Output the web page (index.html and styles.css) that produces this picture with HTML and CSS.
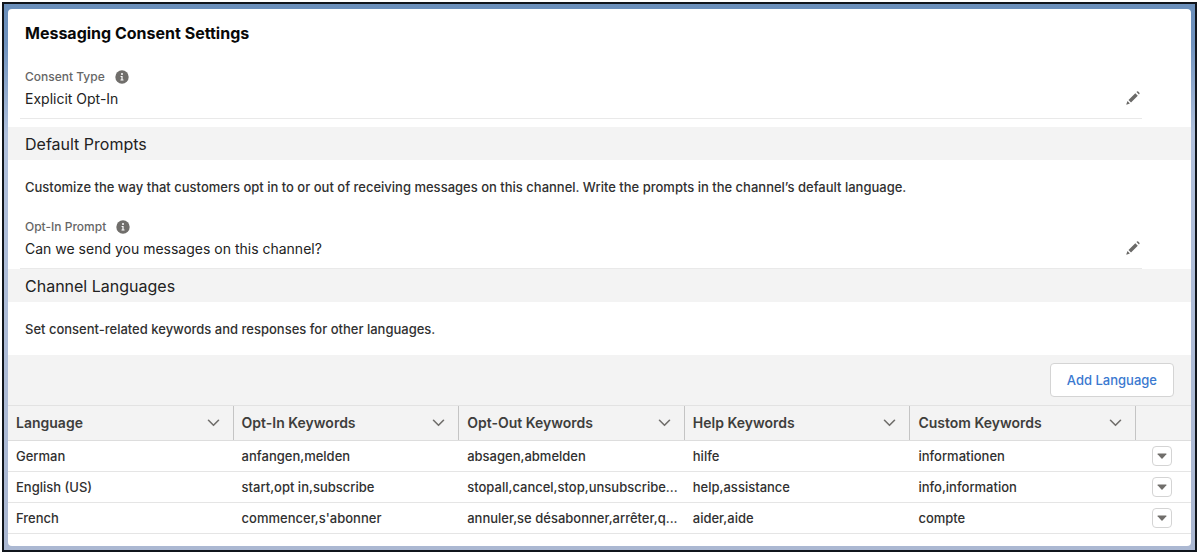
FILE: index.html
```html
<!DOCTYPE html>
<html lang="en">
<head>
    <meta charset="UTF-8">
    <title>Messaging Consent Settings</title>
    <link rel="stylesheet" href="styles.css">
</head>
<body>

<!-- shared icons -->
<svg class="sprite" aria-hidden="true">
    <symbol id="info" viewBox="0 0 14 14">
        <circle cx="7" cy="7" r="6.7" fill="#706e6b"/>
        <circle cx="7" cy="4" r="1" fill="#fff"/>
        <path d="M5.6 6h2v3.4h.9v1h-3v-1h.9V7h-.8z" fill="#fff"/>
    </symbol>
    <symbol id="pencil" viewBox="0 0 14 14">
        <path d="M10.5 1.1l.5-.5q.6-.5 1.2 0l1.2 1.2q.5.6 0 1.2l-.5.5zM9.3 2.2l2.5 2.5-6.8 6.8-2.5-2.5zM1.5 10.1l2.4 2.4-2.8 1.1q-.9.2-.7-.7z" fill="#6b6a68"/>
    </symbol>
    <symbol id="chevron" viewBox="0 0 12 8">
        <path d="M1 1.3l5 5 5-5" fill="none" stroke="#706e6b" stroke-width="1.6" stroke-linecap="round" stroke-linejoin="round"/>
    </symbol>
    <symbol id="caret" viewBox="0 0 10 6">
        <path d="M1 .4h8q.8.1.4.8L5.5 5.6q-.5.5-1 0L.6 1.2Q.2.5 1 .4z" fill="#706e6b"/>
    </symbol>
</svg>

<div class="frame">
    <main class="card">
        <h1 class="title">Messaging Consent Settings</h1>

        <div class="field">
            <div class="field-text">
                <div class="field-label">Consent Type <svg class="info"><use href="#info"/></svg></div>
                <div class="field-value">Explicit Opt-In</div>
            </div>
            <button class="edit" aria-label="Edit Consent Type"><svg><use href="#pencil"/></svg></button>
        </div>

        <h2 class="section-title spaced">Default Prompts</h2>
        <p class="section-text">Customize the way that customers opt in to or out of receiving messages on this channel. Write the prompts in the channel’s default language.</p>

        <div class="field">
            <div class="field-text">
                <div class="field-label">Opt-In Prompt <svg class="info"><use href="#info"/></svg></div>
                <div class="field-value">Can we send you messages on this channel?</div>
            </div>
            <button class="edit" aria-label="Edit Opt-In Prompt"><svg><use href="#pencil"/></svg></button>
        </div>

        <h2 class="section-title">Channel Languages</h2>
        <p class="section-text">Set consent-related keywords and responses for other languages.</p>

        <div class="toolbar">
            <button class="add-button">Add Language</button>
        </div>

        <table class="languages">
            <thead>
                <tr>
                    <th><div class="head">Language <button class="sort" aria-label="Language column actions"><svg><use href="#chevron"/></svg></button></div></th>
                    <th><div class="head">Opt-In Keywords <button class="sort" aria-label="Opt-In column actions"><svg><use href="#chevron"/></svg></button></div></th>
                    <th><div class="head">Opt-Out Keywords <button class="sort" aria-label="Opt-Out column actions"><svg><use href="#chevron"/></svg></button></div></th>
                    <th><div class="head">Help Keywords <button class="sort" aria-label="Help column actions"><svg><use href="#chevron"/></svg></button></div></th>
                    <th><div class="head">Custom Keywords <button class="sort" aria-label="Custom column actions"><svg><use href="#chevron"/></svg></button></div></th>
                    <th class="actions"></th>
                </tr>
            </thead>
            <tbody>
                <tr>
                    <td>German</td>
                    <td>anfangen,melden</td>
                    <td>absagen,abmelden</td>
                    <td>hilfe</td>
                    <td>informationen</td>
                    <td class="actions"><button class="row-menu" aria-label="German actions"><svg><use href="#caret"/></svg></button></td>
                </tr>
                <tr>
                    <td>English (US)</td>
                    <td>start,opt in,subscribe</td>
                    <td>stopall,cancel,stop,unsubscribe...</td>
                    <td>help,assistance</td>
                    <td>info,information</td>
                    <td class="actions"><button class="row-menu" aria-label="English (US) actions"><svg><use href="#caret"/></svg></button></td>
                </tr>
                <tr>
                    <td>French</td>
                    <td>commencer,s'abonner</td>
                    <td>annuler,se désabonner,arrêter,q...</td>
                    <td>aider,aide</td>
                    <td>compte</td>
                    <td class="actions"><button class="row-menu" aria-label="French actions"><svg><use href="#caret"/></svg></button></td>
                </tr>
            </tbody>
        </table>
    </main>
</div>

</body>
</html>
```
FILE: styles.css
```css
* {
    box-sizing: border-box;
}

body {
    margin: 2px 3px 2px 2px;
    background-color: white;
    color: #222222;
    font-family: Inter, "Liberation Sans", sans-serif;
    font-size: 14px;
    line-height: 20px;
}

button {
    padding: 0;
    border: none;
    background: none;
    font: inherit;
    cursor: pointer;
}

svg {
    display: block;
}

.sprite {
    display: none;
}

.frame {
    border: 2px solid #10151c;
    padding: 5px 4px 4px;
    background: linear-gradient(#6a8fbb 0, #7093bf 40px, #b0c0dc 130px, #abb8d2 100%);
}

.card {
    padding: 14px 0 12px;
    border-radius: 4px;
    background-color: white;
    overflow: hidden;
}

.title {
    margin: 0 17px 24px;
    color: #080808;
    font-size: 16px;
    line-height: 20px;
    font-weight: 700;
}

.field {
    display: flex;
    justify-content: space-between;
    align-items: center;
    margin: 0 49px 0 12px;
    padding: 0 2px 9px 5px;
    border-bottom: 1px solid #e9e9e9;
}

.field-text {
    display: grid;
    gap: 2px;
}

.field-label {
    display: flex;
    align-items: center;
    gap: 10px;
    color: #666666;
    font-size: 12px;
    font-weight: 500;
}

.info,
.edit svg {
    width: 14px;
    height: 14px;
}

.edit {
    padding-top: 20px;
}

.section-title {
    margin: 0;
    padding: 7px 17px 6px;
    background-color: #f3f3f3;
    font-size: 16px;
    line-height: 20px;
    font-weight: 400;
}

.spaced {
    margin-top: 8px;
}

.section-text {
    margin: 0;
    padding: 17px 17px 16px;
    color: #303030;
    font-size: 13px;
    font-weight: 500;
}

.section-text + .field {
    margin-top: 4px;
}

.toolbar {
    display: flex;
    justify-content: flex-end;
    padding: 8px 17px;
    background-color: #f3f3f3;
}

.add-button {
    padding: 6px 16px;
    border: 1px solid #d4d4d4;
    border-radius: 4px;
    background-color: white;
    color: #3a79d0;
    font-size: 13px;
    font-weight: 500;
}

.languages {
    width: 100%;
    border-collapse: separate;
    border-spacing: 0;
    table-layout: fixed;
}

.languages th {
    height: 36px;
    padding: 0;
    border-top: 1px solid #e2e2e2;
    border-bottom: 1px solid #dddddd;
    background-color: #f3f3f3;
    color: #3e3e3c;
    text-align: left;
    font-weight: 600;
}

.head {
    display: flex;
    justify-content: space-between;
    align-items: center;
    height: 34px;
    padding: 0 13px 0 8px;
    border-right: 1px solid #c4c4c4;
}

.sort svg {
    width: 13px;
    height: 8px;
}

.languages td {
    height: 31px;
    padding: 0 8px;
    border-bottom: 1px solid #e5e5e5;
    color: #303030;
    white-space: nowrap;
    font-size: 13px;
    font-weight: 500;
}

.languages .actions {
    width: 55px;
    padding: 0 19px 0 16px;
}

.row-menu {
    display: grid;
    place-items: center;
    width: 20px;
    height: 20px;
    border: 1px solid #d4d4d4;
    border-radius: 4px;
    background-color: white;
}

.row-menu svg {
    width: 10px;
    height: 6px;
}
```
